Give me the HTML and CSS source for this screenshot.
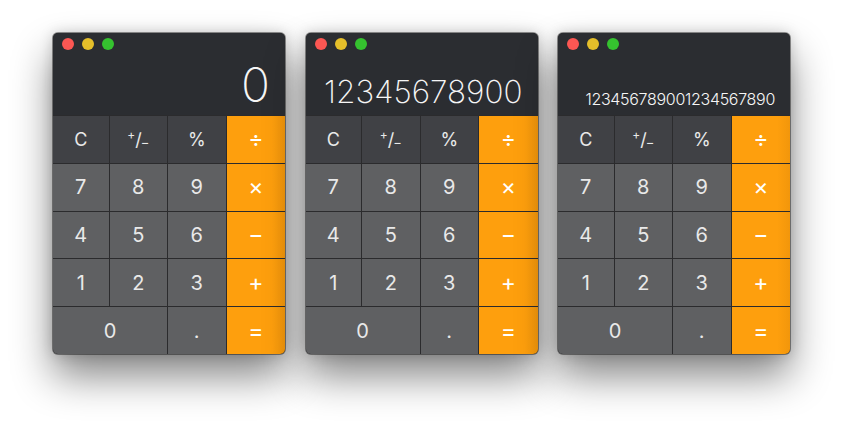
FILE: index.html
```html
<!DOCTYPE html>
<html>
<head>
<meta charset="utf-8">
<link rel="stylesheet" href="styles.css">
</head>
<body>
<div class="stage">
  <div class="calc">
    <div class="display">
      <div class="lights"><span class="light red"></span><span class="light yellow"></span><span class="light green"></span></div>
      <div class="value value-xl">0</div>
    </div>
    <div class="keys">
      <div class="key fn">C</div>
      <div class="key fn"><span class="sup">+</span>/<span class="sub">−</span></div>
      <div class="key fn">%</div>
      <div class="key op">÷</div>
      <div class="key">7</div><div class="key">8</div><div class="key">9</div><div class="key op">×</div>
      <div class="key">4</div><div class="key">5</div><div class="key">6</div><div class="key op">−</div>
      <div class="key">1</div><div class="key">2</div><div class="key">3</div><div class="key op">+</div>
      <div class="key wide">0</div><div class="key">.</div><div class="key op">=</div>
    </div>
  </div>
  <div class="calc">
    <div class="display">
      <div class="lights"><span class="light red"></span><span class="light yellow"></span><span class="light green"></span></div>
      <div class="value value-md">12345678900</div>
    </div>
    <div class="keys">
      <div class="key fn">C</div>
      <div class="key fn"><span class="sup">+</span>/<span class="sub">−</span></div>
      <div class="key fn">%</div>
      <div class="key op">÷</div>
      <div class="key">7</div><div class="key">8</div><div class="key">9</div><div class="key op">×</div>
      <div class="key">4</div><div class="key">5</div><div class="key">6</div><div class="key op">−</div>
      <div class="key">1</div><div class="key">2</div><div class="key">3</div><div class="key op">+</div>
      <div class="key wide">0</div><div class="key">.</div><div class="key op">=</div>
    </div>
  </div>
  <div class="calc">
    <div class="display">
      <div class="lights"><span class="light red"></span><span class="light yellow"></span><span class="light green"></span></div>
      <div class="value value-sm">123456789001234567890</div>
    </div>
    <div class="keys">
      <div class="key fn">C</div>
      <div class="key fn"><span class="sup">+</span>/<span class="sub">−</span></div>
      <div class="key fn">%</div>
      <div class="key op">÷</div>
      <div class="key">7</div><div class="key">8</div><div class="key">9</div><div class="key op">×</div>
      <div class="key">4</div><div class="key">5</div><div class="key">6</div><div class="key op">−</div>
      <div class="key">1</div><div class="key">2</div><div class="key">3</div><div class="key op">+</div>
      <div class="key wide">0</div><div class="key">.</div><div class="key op">=</div>
    </div>
  </div>
</div>
</body>
</html>
```

FILE: styles.css
```css
html, body {
  margin: 0;
  padding: 0;
  background: #ffffff;
}
body {
  width: 844px;
  height: 423px;
  overflow: hidden;
  font-family: Inter, Roboto, "Liberation Sans", sans-serif;
}
.stage {
  display: flex;
  gap: 20.5px;
  padding: 33px 0 0 53px;
}
.calc {
  width: 232px;
  height: 321px;
  display: flex;
  flex-direction: column;
  border-radius: 5px;
  overflow: hidden;
  background: #2b2b2d;
  box-shadow: 0 0 0 1px rgba(0, 0, 0, 0.4), 0 0 14px rgba(0, 0, 0, 0.18), 0 22px 40px rgba(0, 0, 0, 0.48);
}
.display {
  height: 82px;
  flex: none;
  background: #2b2d31;
  display: flex;
  flex-direction: column;
  justify-content: space-between;
  box-sizing: border-box;
  padding: 5px 15px 6px 9px;
}
.lights {
  display: flex;
  gap: 8px;
}
.light {
  width: 12px;
  height: 12px;
  border-radius: 50%;
}
.red { background: #fc5753; }
.yellow { background: #e5bf2a; }
.green { background: #35c22f; }
.value {
  color: #f6f6f6;
  font-weight: 200;
  line-height: 1;
  text-align: right;
  white-space: nowrap;
}
.value-xl { font-size: 48px; }
.value-md { font-size: 31.5px; padding-bottom: 2px; }
.value-sm { font-size: 16px; font-weight: 300; letter-spacing: -0.3px; padding-bottom: 2px; }
.keys {
  flex: 1;
  display: grid;
  grid-template-columns: 56fr 58fr 58fr 59fr;
  grid-template-rows: repeat(5, 1fr);
  gap: 1px;
  padding-top: 1px;
  background: #2b2b2d;
}
.key {
  display: flex;
  align-items: center;
  justify-content: center;
  background: #5f6062;
  color: #e9e9e9;
  font-size: 20px;
}
.key.fn {
  background: #404145;
  font-size: 18px;
}
.key.op {
  background: linear-gradient(to right, #fe9f0d 78%, #f2960b 100%);
  color: #ffffff;
  font-size: 23px;
}
.key.wide {
  grid-column: span 2;
}
.sup {
  font-size: 12px;
  position: relative;
  top: -5px;
}
.sub {
  font-size: 13px;
  position: relative;
  top: 3px;
  margin-left: -1px;
}
```
